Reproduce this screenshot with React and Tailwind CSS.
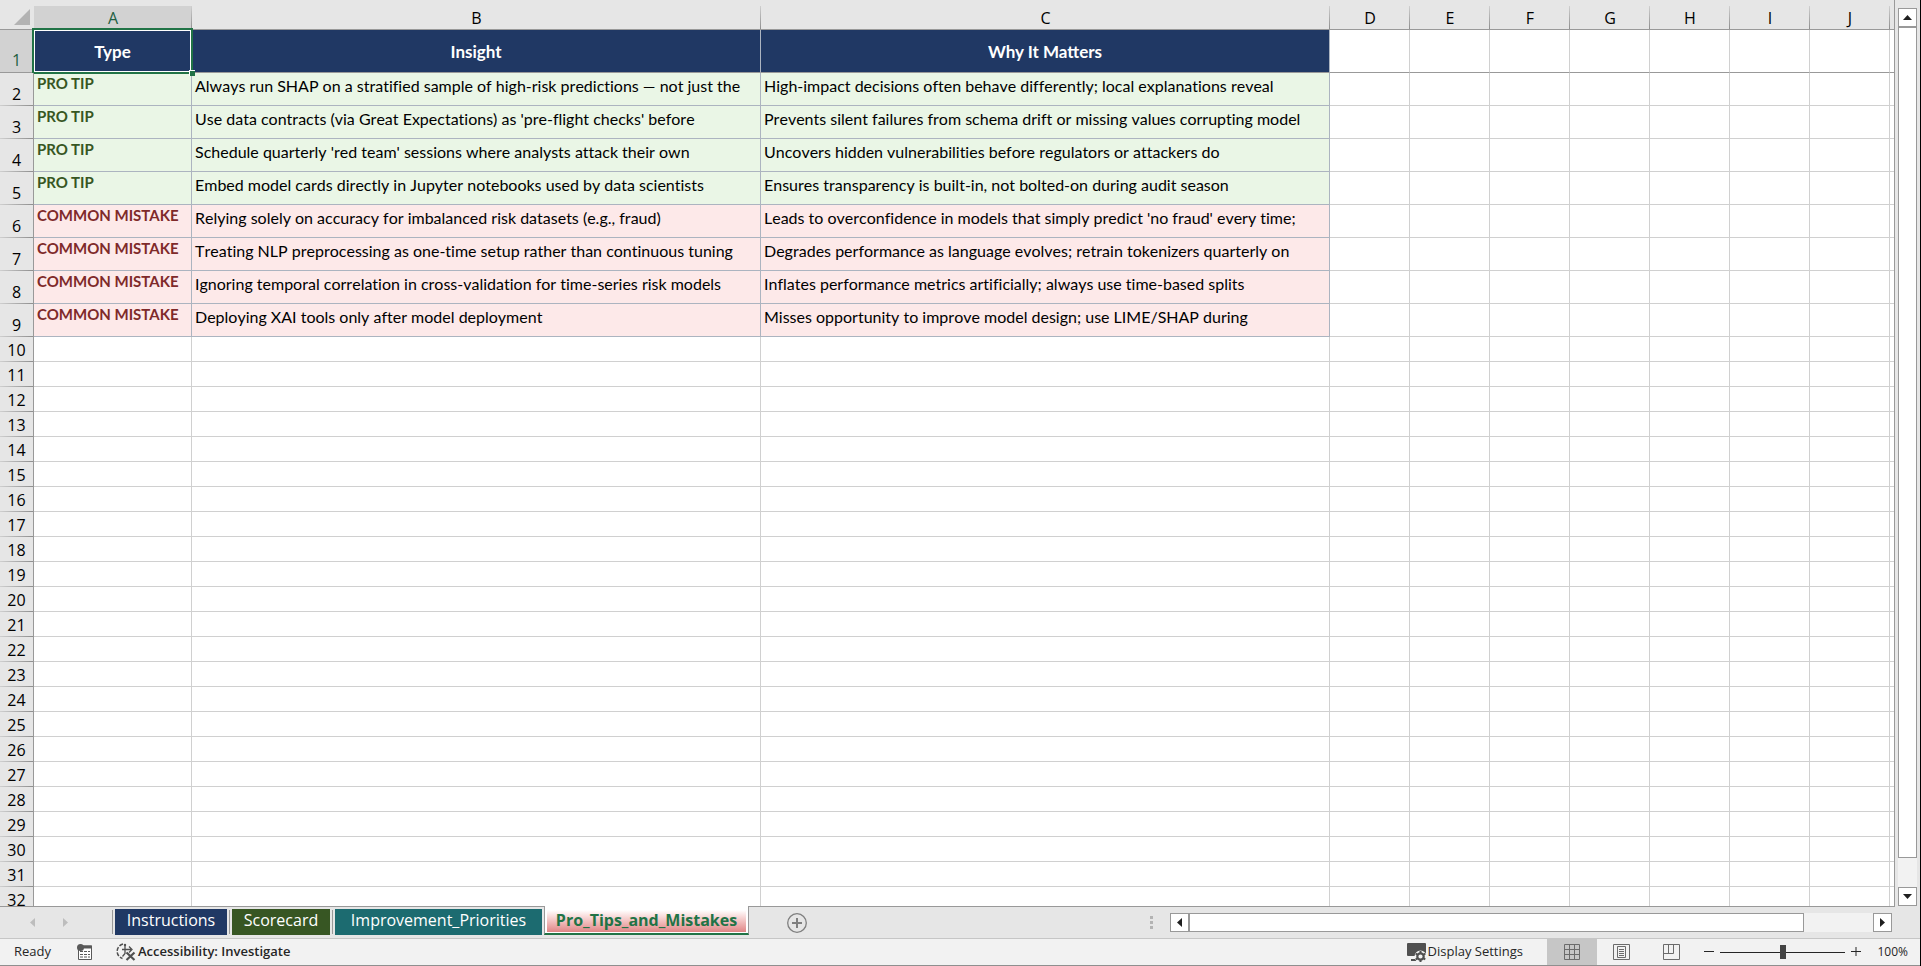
import React from "react";
import clsx from "clsx";

const rows = [
  {
    type: "PRO TIP",
    insight:
      "Always run SHAP on a stratified sample of high-risk predictions — not just the",
    why: "High-impact decisions often behave differently; local explanations reveal",
  },
  {
    type: "PRO TIP",
    insight: "Use data contracts (via Great Expectations) as 'pre-flight checks' before",
    why: "Prevents silent failures from schema drift or missing values corrupting model",
  },
  {
    type: "PRO TIP",
    insight: "Schedule quarterly 'red team' sessions where analysts attack their own",
    why: "Uncovers hidden vulnerabilities before regulators or attackers do",
  },
  {
    type: "PRO TIP",
    insight: "Embed model cards directly in Jupyter notebooks used by data scientists",
    why: "Ensures transparency is built-in, not bolted-on during audit season",
  },
  {
    type: "COMMON MISTAKE",
    insight: "Relying solely on accuracy for imbalanced risk datasets (e.g., fraud)",
    why: "Leads to overconfidence in models that simply predict 'no fraud' every time;",
  },
  {
    type: "COMMON MISTAKE",
    insight: "Treating NLP preprocessing as one-time setup rather than continuous tuning",
    why: "Degrades performance as language evolves; retrain tokenizers quarterly on",
  },
  {
    type: "COMMON MISTAKE",
    insight: "Ignoring temporal correlation in cross-validation for time-series risk models",
    why: "Inflates performance metrics artificially; always use time-based splits",
  },
  {
    type: "COMMON MISTAKE",
    insight: "Deploying XAI tools only after model deployment",
    why: "Misses opportunity to improve model design; use LIME/SHAP during",
  },
];

const columns = ["A", "B", "C", "D", "E", "F", "G", "H", "I", "J"];
const emptyColumns = ["D", "E", "F", "G", "H", "I", "J"];
const emptyRows = Array.from({ length: 23 }, (_, i) => i + 10);

const RowNumber = ({ number, active }) => (
  <th
    scope="row"
    className={clsx(
      "relative border-r border-[#999999] p-0 pb-0.5 text-center align-bottom font-['Open_Sans',sans-serif] text-base leading-5 font-normal",
      active ? "border-b bg-[#d2d2d2] text-[#1e6042]" : "bg-[#e6e6e6]"
    )}
  >
    {number}
    {!active && (
      <span className="absolute inset-x-0 bottom-0 h-px bg-linear-to-r from-[#cfcfcf] to-[#8f8f8f]" />
    )}
  </th>
);

const EmptyCells = ({ frozen }) => (
  <>
    {emptyColumns.map((col) => (
      <td
        key={col}
        className={clsx(
          "border-r border-b border-r-[#d0d0d0] p-0",
          frozen ? "border-b-[#999999]" : "border-b-[#d0d0d0]"
        )}
      />
    ))}
    <td
      className={clsx(
        "border-b p-0",
        frozen ? "border-b-[#999999]" : "border-b-[#d0d0d0]"
      )}
    />
  </>
);

const Sheet = () => (
  <table className="w-full table-fixed border-separate border-spacing-0 bg-white whitespace-nowrap">
    <colgroup>
      <col className="w-[34px]" />
      <col className="w-[158px]" />
      <col className="w-[569px]" />
      <col className="w-[569px]" />
      {emptyColumns.map((col) => (
        <col key={col} className="w-20" />
      ))}
      <col />
    </colgroup>
    <thead>
      <tr className="h-[30px] bg-[#e6e6e6]">
        <th className="border-b border-[#999999] p-0">
          <button aria-label="Select all" className="block pt-1 pl-3.5">
            <svg width="16" height="16" viewBox="0 0 16 16">
              <path d="M16 0v16H0z" fill="#b3b3b3" />
            </svg>
          </button>
        </th>
        {columns.map((col) => (
          <th
            key={col}
            scope="col"
            className="border-b border-[#999999] p-0 pt-1.5 text-base font-normal"
          >
            <div
              className={clsx(
                "relative h-[23px] leading-6",
                col === "A" && "bg-[#d2d2d2] text-[#1e6042]"
              )}
            >
              {col}
              <span className="absolute inset-y-0 right-0 w-px bg-linear-to-b from-[#cfcfcf] to-[#8f8f8f]" />
            </div>
          </th>
        ))}
        <th className="border-b border-[#999999] p-0" />
      </tr>
    </thead>
    <tbody>
      <tr className="h-[43px] font-[Lato,sans-serif] text-[17px] leading-5">
        <RowNumber number={1} active />
        <td className="relative border-r border-b border-[#999999] bg-[#203864] p-0 pt-0.5 text-center font-bold text-white">
          Type
          <span className="absolute -inset-0.5 border-2 border-[#217346]">
            <span className="absolute inset-0 border border-white" />
          </span>
          <span className="absolute -right-1 -bottom-1 z-10 size-1.5 border-t border-l border-white bg-[#217346]" />
        </td>
        <td className="border-r border-b border-r-[#acb4c0] border-b-[#999999] bg-[#203864] p-0 pt-0.5 text-center font-bold text-white">
          Insight
        </td>
        <td className="border-r border-b border-r-[#acb4c0] border-b-[#999999] bg-[#203864] p-0 pt-0.5 text-center font-bold text-white">
          Why It Matters
        </td>
        <EmptyCells frozen />
      </tr>
      {rows.map((row, i) => {
        const tip = row.type === "PRO TIP";
        return (
          <tr
            key={row.insight}
            className={clsx(
              "h-[33px] font-[Lato,sans-serif] text-base leading-5 [font-kerning:none] [font-variant-ligatures:none]",
              tip ? "[&>.fill]:bg-[#eaf6e6]" : "[&>.fill]:bg-[#fde9e9]"
            )}
          >
            <RowNumber number={i + 2} />
            <td
              className={clsx(
                "fill overflow-hidden border-r border-b border-[#acb4c0] p-0 pl-[3px] align-top text-[15px] font-bold [font-kerning:normal]",
                tip ? "text-[#375623]" : "text-[#7f2a2a]"
              )}
            >
              {row.type}
            </td>
            <td className="fill overflow-hidden border-r border-b border-[#acb4c0] p-0 pt-[3px] pl-[3px] align-top">
              {row.insight}
            </td>
            <td className="fill overflow-hidden border-r border-b border-[#acb4c0] p-0 pt-[3px] pl-[3px] align-top">
              {row.why}
            </td>
            <EmptyCells />
          </tr>
        );
      })}
      {emptyRows.map((n) => (
        <tr key={n} className="h-[25px]">
          <RowNumber number={n} />
          <td className="border-r border-b border-[#d0d0d0] p-0" />
          <td className="border-r border-b border-[#d0d0d0] p-0" />
          <td className="border-r border-b border-[#d0d0d0] p-0" />
          <EmptyCells />
        </tr>
      ))}
    </tbody>
  </table>
);

const ScrollButton = ({ label, d }) => (
  <button
    aria-label={label}
    className="flex size-[19px] shrink-0 items-center justify-center border border-[#999999] bg-white"
  >
    <svg width="9" height="9" viewBox="0 0 9 9">
      <path d={d} fill="#1f1f1f" />
    </svg>
  </button>
);

const VerticalScroll = () => (
  <div className="flex w-[25px] shrink-0 flex-col pt-2 pb-px pl-[3px]">
    <ScrollButton label="Scroll up" d="M0 7L4.500 2L9 7z" />
    <div className="flex w-[19px] flex-1 flex-col bg-[#f2f2f2] pb-[29px]">
      <div className="flex-1 border border-[#999999] bg-white" />
    </div>
    <ScrollButton label="Scroll down" d="M0 2L4.500 7L9 2z" />
  </div>
);

const tabs = [
  { name: "Instructions", className: "w-28 bg-[#203864]" },
  { name: "Scorecard", className: "w-[98px] bg-[#375623]" },
  { name: "Improvement_Priorities", className: "w-[207px] bg-[#1c6b70]" },
];

const SheetTabs = () => (
  <div className="flex h-8 shrink-0 border-b border-[#c6c6c6] text-base">
    <div className="flex w-28 shrink-0 items-center gap-7 pl-[30px]">
      <button aria-label="Previous sheet">
        <svg width="5" height="9" viewBox="0 0 5 9">
          <path d="M5 0v9L0 4.500z" fill="#bdbdbd" />
        </svg>
      </button>
      <button aria-label="Next sheet">
        <svg width="5" height="9" viewBox="0 0 5 9">
          <path d="M0 0v9l5-4.500z" fill="#bdbdbd" />
        </svg>
      </button>
    </div>
    {tabs.map((tab) => (
      <div key={tab.name} className="flex gap-0.5 pt-0.5 pr-0.5">
        <span className="mt-px h-6 w-px bg-[#999999]" />
        <button
          className={clsx("h-[26px] pb-1 leading-5 text-white", tab.className)}
        >
          {tab.name}
        </button>
      </div>
    ))}
    <button className="z-10 -mt-px h-[29px] w-[205px] border-x border-b-2 border-x-[#999999] border-b-[#217346] bg-white px-0.5 pt-1 pb-px font-bold text-[#217346]">
      <span className="block h-[22px] bg-linear-to-b from-white to-[#df8586] leading-5">
        Pro_Tips_and_Mistakes
      </span>
    </button>
    <button aria-label="New sheet" className="ml-[38px]">
      <svg width="20" height="20" viewBox="0 0 20 20" fill="none" stroke="#7f7f7f">
        <circle cx="10" cy="10" r="9.300" strokeWidth="1.300" />
        <path d="M10 5v10M5 10h10" strokeWidth="2" />
      </svg>
    </button>
    <div className="ml-auto flex w-[770px] items-center gap-[17px] pr-7">
      <div className="flex flex-col gap-0.5">
        <span className="size-[3px] bg-[#b3b3b3]" />
        <span className="size-[3px] bg-[#b3b3b3]" />
        <span className="size-[3px] bg-[#b3b3b3]" />
      </div>
      <div className="flex flex-1 bg-[#f2f2f2]">
        <ScrollButton label="Scroll left" d="M7 0v9L2 4.500z" />
        <div className="flex flex-1 pr-[69px]">
          <div className="flex-1 border border-[#999999] bg-white" />
        </div>
        <ScrollButton label="Scroll right" d="M2 0v9L7 4.500z" />
      </div>
    </div>
  </div>
);

const StatusBar = () => (
  <div className="flex h-[27px] shrink-0 items-center border-b border-[#8f8f8f] bg-[#f2f2f2] text-[13px] text-[#262626]">
    <span className="w-[77px] pl-3.5">Ready</span>
    <button aria-label="Record macro" className="mr-[23px]">
      <svg width="16" height="16" viewBox="0 0 16 16">
        <path d="M1.500 4v11.500h13V2H6" fill="white" stroke="#595959" />
        <path d="M5 1.500h10v3H5z" fill="#595959" />
        <circle cx="3.500" cy="3.500" r="3.500" fill="#595959" />
        <path
          d="M3 7.500h3m1 0h3m1 0h2M3 10.500h3m1 0h3m1 0h2M3 13h3m1 0h3m1 0h2"
          stroke="#595959"
        />
      </svg>
    </button>
    <button className="flex items-center gap-0.5 font-semibold">
      <svg width="20" height="18" viewBox="0 0 20 18" fill="none" stroke="#505050">
        <path
          d="M7 1A7.500 7.500 0 0 0 6.500 15.500"
          strokeWidth="1.500"
          strokeDasharray="4 1.500"
        />
        <path d="M6 6.500h9M9 2.500v8l-2.500 3M13 3.500l3 3-3 3" strokeWidth="1.300" />
        <circle cx="9" cy="2" r="1.200" fill="#505050" stroke="none" />
        <path d="M10.500 9.500l8 7.500M18.500 9.500l-8 7.500" strokeWidth="2.200" />
      </svg>
      Accessibility: Investigate
    </button>
    <button className="ml-auto flex items-center gap-0.5">
      <svg width="19" height="19" viewBox="0 0 19 19">
        <path d="M1 0h17a1 1 0 0 1 1 1v12H1a1 1 0 0 1-1-1V1a1 1 0 0 1 1-1z" fill="#505050" />
        <path d="M4 17h5" stroke="#505050" strokeWidth="2" />
        <circle cx="13.500" cy="13.500" r="6" fill="#f2f2f2" />
        <circle cx="13.500" cy="13.500" r="3.200" fill="none" stroke="#505050" strokeWidth="2.200" />
        <path
          d="M13.500 8v2M13.500 17v2M8.700 10.700l1.800 1M16.500 15.300l1.800 1M8.700 16.300l1.800-1M16.500 11.700l1.800-1"
          stroke="#505050"
          strokeWidth="2"
        />
      </svg>
      Display Settings
    </button>
    <div className="ml-6 flex self-stretch text-[#6b6b6b]">
      <button
        aria-label="Normal view"
        className="flex w-[50px] items-center justify-center bg-[#c6c6c6]"
      >
        <svg width="16" height="16" viewBox="0 0 16 16" fill="none" stroke="currentColor">
          <path d="M.5.5h15v15H.5zM5.500 0v16M10.500 0v16M0 5.500h16M0 10.500h16" />
        </svg>
      </button>
      <button aria-label="Page layout" className="flex w-[49px] items-center justify-center">
        <svg width="17" height="16" viewBox="0 0 17 16" fill="none" stroke="currentColor">
          <path d="M.5.5h16v15H.5zM4.500 2.500h8v11h-8zM6 5.500h5M6 7.500h5M6 9.500h5M6 11.500h5" />
        </svg>
      </button>
      <button
        aria-label="Page break preview"
        className="flex w-[50px] items-center justify-center"
      >
        <svg width="17" height="16" viewBox="0 0 17 16" fill="none" stroke="currentColor">
          <path d="M.5.5h16v15H.5zM.5 9.500h10v-9M5.500.5v9" />
        </svg>
      </button>
    </div>
    <div className="flex items-center gap-1.5 pl-2">
      <button aria-label="Zoom out">
        <svg width="10" height="10" viewBox="0 0 10 10">
          <path d="M0 4.500h10" stroke="#262626" />
        </svg>
      </button>
      <input
        type="range"
        aria-label="Zoom"
        min="0"
        max="100"
        defaultValue="50"
        className="h-4 w-[125px] appearance-none bg-transparent [&::-webkit-slider-runnable-track]:h-px [&::-webkit-slider-runnable-track]:bg-[#262626] [&::-webkit-slider-thumb]:-mt-[7px] [&::-webkit-slider-thumb]:h-3.5 [&::-webkit-slider-thumb]:w-1.5 [&::-webkit-slider-thumb]:appearance-none [&::-webkit-slider-thumb]:bg-[#444444]"
      />
      <button aria-label="Zoom in">
        <svg width="10" height="10" viewBox="0 0 10 10">
          <path d="M0 4.500h10M5 0v9" stroke="#262626" />
        </svg>
      </button>
    </div>
    <button className="w-[59px] pr-3 text-right text-xs">100%</button>
  </div>
);

const App = () => {
  return (
    <div className="flex h-screen flex-col overflow-hidden border-r border-black bg-[#e6e6e6] font-['Open_Sans','Noto_Sans',sans-serif] text-black">
      <div className="flex min-h-0 flex-1">
        <div className="min-w-0 flex-1 overflow-hidden border-r border-b border-[#999999]">
          <Sheet />
        </div>
        <VerticalScroll />
      </div>
      <SheetTabs />
      <StatusBar />
    </div>
  );
};

export default App;
